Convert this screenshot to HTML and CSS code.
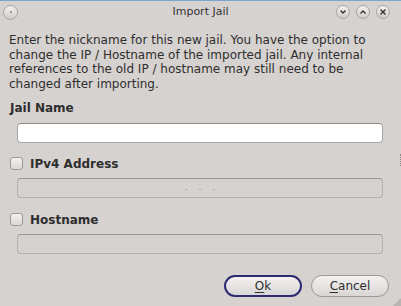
FILE: index.html
```html
<!DOCTYPE html>
<html lang="en">
<head>
  <meta charset="UTF-8">
  <title>Import Jail</title>
  <link rel="stylesheet" href="styles.css">
</head>
<body>
  <div class="window">
    <div class="titlebar">
      <span class="tb-btn tb-menu"><span class="dot"></span></span>
      <span class="title">Import Jail</span>
      <div class="tb-right">
        <span class="tb-btn">
          <svg width="8" height="8" viewBox="0 0 8 8"><path d="M1.5 2.5 L4 5 L6.5 2.5" fill="none" stroke="#333" stroke-width="1.4"/></svg>
        </span>
        <span class="tb-btn">
          <svg width="8" height="8" viewBox="0 0 8 8"><path d="M1.5 5.5 L4 3 L6.5 5.5" fill="none" stroke="#333" stroke-width="1.4"/></svg>
        </span>
        <span class="tb-btn">
          <svg width="8" height="8" viewBox="0 0 8 8"><path d="M1.5 1.5 L6.5 6.5 M6.5 1.5 L1.5 6.5" fill="none" stroke="#333" stroke-width="1.4"/></svg>
        </span>
      </div>
    </div>

    <div class="content">
      <p class="intro">Enter the nickname for this new jail. You have the option to change the IP / Hostname of the imported jail. Any internal references to the old IP / hostname may still need to be changed after importing.</p>

      <div class="label">Jail Name</div>
      <div class="field"><input class="input" type="text"></div>

      <div class="check-row"><span class="checkbox"></span><span class="label-inline">IPv4 Address</span></div>
      <div class="field"><div class="input disabled ip"><span>.</span><span>.</span><span>.</span></div></div>

      <div class="check-row second"><span class="checkbox"></span><span class="label-inline">Hostname</span></div>
      <div class="field"><div class="input disabled"></div></div>

      <div class="buttons">
        <button class="btn default"><u>O</u>k</button>
        <button class="btn"><u>C</u>ancel</button>
      </div>
    </div>
    <span class="grip"></span>
    <span class="splitter"></span>
  </div>
</body>
</html>
```

FILE: styles.css
```css
body {
  margin: 0;
  background: #d6d2d0;
  font-family: "DejaVu Sans", sans-serif;
  color: #2e2e2e;
  overflow: hidden;
}
.window {
  position: relative;
  width: 401px;
  height: 306px;
  border-top: 1px solid #7ca6cf;
  box-sizing: border-box;
}
.titlebar {
  height: 22px;
  display: flex;
  align-items: center;
  position: relative;
}
.title {
  position: absolute;
  left: 0;
  right: 0;
  text-align: center;
  font-size: 11px;
  color: #333;
  top: 4px;
}
.tb-btn {
  width: 14px;
  height: 14px;
  border-radius: 50%;
  background: linear-gradient(#f4f3f2, #cfcbc8);
  border: 1px solid #a8a4a1;
  box-sizing: border-box;
  display: inline-flex;
  align-items: center;
  justify-content: center;
  position: relative;
  z-index: 1;
}
.tb-menu {
  margin-left: 3px;
  width: 15px;
  height: 15px;
}
.dot {
  width: 2px;
  height: 2px;
  background: #888;
  border-radius: 50%;
}
.tb-right {
  margin-left: auto;
  margin-right: 11px;
  display: flex;
  gap: 6px;
  position: relative;
  z-index: 1;
}
.content {
  padding: 10px 9px 0 9px;
}
.intro {
  margin: 0;
  font-size: 12px;
  line-height: 14.5px;
  color: #2e2e2e;
}
.label {
  font-weight: bold;
  font-size: 12px;
  margin-top: 10px;
  margin-left: 1px;
  height: 15px;
}
.field {
  padding: 7px 9px 0 8px;
}
.input {
  display: block;
  width: 100%;
  height: 20px;
  box-sizing: border-box;
  border: 1px solid #a9a5a2;
  border-top-color: #8f8b88;
  border-radius: 4px;
  background: #fff;
  margin: 0;
  padding: 0;
  font-size: 12px;
}
.disabled {
  background: #d6d2d0;
  border-color: #b4b0ad;
  border-top-color: #9a9693;
}
.ip {
  display: flex;
  justify-content: center;
  gap: 11px;
  font-size: 9px;
  color: #888;
  line-height: 16px;
}
.check-row {
  display: flex;
  align-items: center;
  margin-top: 13px;
  margin-left: 1px;
  height: 15px;
}
.check-row.second {
  margin-top: 14px;
}
.checkbox {
  width: 13px;
  height: 13px;
  box-sizing: border-box;
  border: 1px solid #9e9a97;
  border-radius: 3px;
  background: linear-gradient(#f2f1f0, #dcd9d7);
}
.label-inline {
  font-weight: bold;
  font-size: 12px;
  margin-left: 7px;
}
.buttons {
  display: flex;
  justify-content: flex-end;
  gap: 9px;
  margin-top: 21px;
  margin-right: 3px;
}
.btn {
  width: 78px;
  height: 22px;
  box-sizing: border-box;
  border-radius: 11px;
  border: 1px solid #9c9895;
  background: linear-gradient(#f3f2f1, #d9d6d4);
  font-family: "DejaVu Sans", sans-serif;
  font-size: 12px;
  color: #2e2e2e;
  padding: 0;
}
.btn.default {
  border: 2px solid #2d2b73;
}
.btn u {
  text-decoration-thickness: 1px;
  text-underline-offset: 2px;
}
.grip {
  position: absolute;
  right: 0;
  bottom: 0;
  width: 0;
  height: 0;
  border-left: 8px solid transparent;
  border-bottom: 8px solid #b9b5b2;
}
.splitter {
  position: absolute;
  right: 0;
  top: 153px;
  width: 1px;
  height: 12px;
  border-right: 1px dotted #8a8684;
}
```
